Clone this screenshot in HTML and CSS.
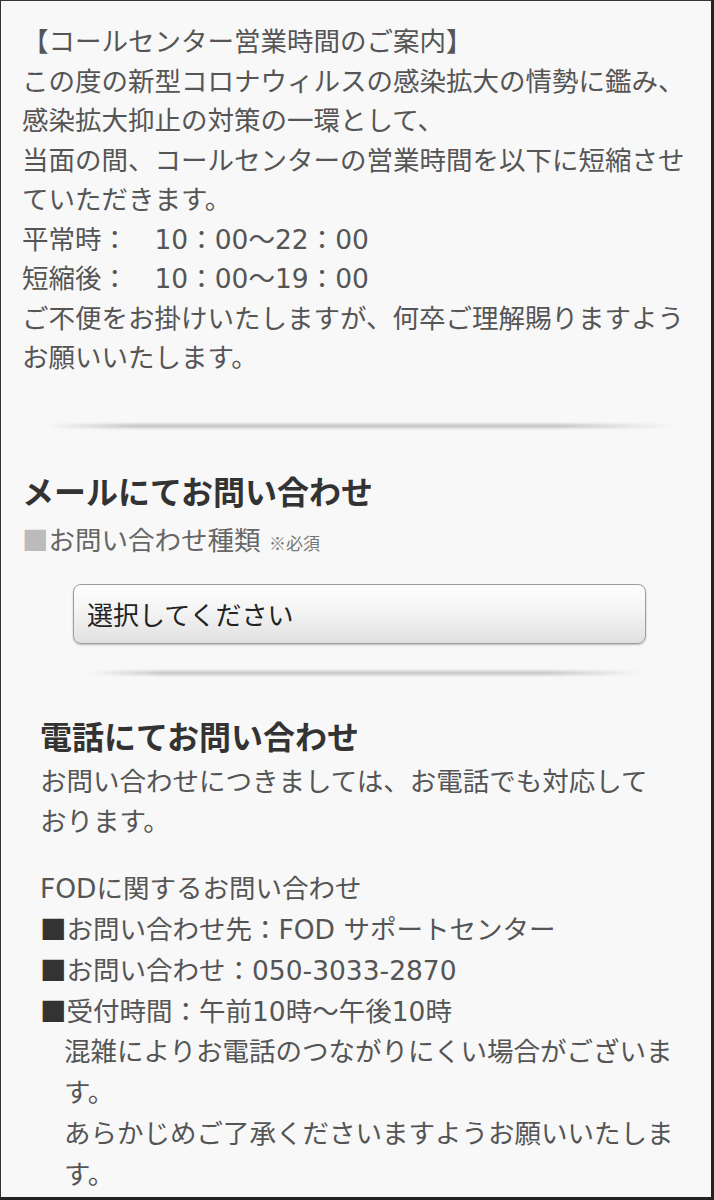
FILE: index.html
```html
<!DOCTYPE html>
<html lang="ja">
<head>
<meta charset="utf-8">
<title>お問い合わせ</title>
<link rel="stylesheet" href="styles.css">
</head>
<body>
<div class="page">
  <section class="notice">
    <p>【コールセンター営業時間のご案内】<br>この度の新型コロナウィルスの感染拡大の情勢に鑑み、<br>感染拡大抑止の対策の一環として、<br>当面の間、コールセンターの営業時間を以下に短縮させていただきます。<br>平常時：　10：00〜22：00<br>短縮後：　10：00〜19：00<br>ご不便をお掛けいたしますが、何卒ご理解賜りますようお願いいたします。</p>
  </section>

  <div class="divider"></div>

  <section class="mail">
    <h2 class="heading">メールにてお問い合わせ</h2>
    <p class="label"><span class="sq">■</span>お問い合わせ種類 <span class="req">※必須</span></p>
    <div class="select">選択してください</div>
  </section>

  <div class="divider divider-short"></div>

  <section class="phone">
    <h2 class="heading">電話にてお問い合わせ</h2>
    <p class="lead">お問い合わせにつきましては、お電話でも対応しております。</p>
    <p class="info">FODに関するお問い合わせ<br><span class="mark">■</span>お問い合わせ先：FOD サポートセンター<br><span class="mark">■</span>お問い合わせ：050-3033-2870<br><span class="mark">■</span>受付時間：午前10時〜午後10時</p>
    <p class="note">混雑によりお電話のつながりにくい場合がございます。<br>あらかじめご了承くださいますようお願いいたします。</p>
  </section>
</div>
</body>
</html>
```

FILE: styles.css
```css
html, body {
  margin: 0;
  padding: 0;
}

body {
  background: #f8f8f8;
  font-family: "DejaVu Sans", "Noto Sans CJK JP", sans-serif;
  color: #555;
}

.page {
  box-sizing: border-box;
  width: 714px;
  height: 1200px;
  overflow: hidden;
  background: #f8f8f8;
  border-top: 1px solid #333;
  border-left: 1px solid #333;
  border-right: 3px solid #222;
  border-bottom: 3px solid #222;
  padding: 21px 18px 0 21px;
  font-size: 26.5px;
  line-height: 39.75px;
}

p {
  margin: 0;
}

.notice p {
  line-height: 39.5px;
}

.divider {
  height: 4px;
  margin: 46px 20px 0 24px;
  background: linear-gradient(to right, rgba(0,0,0,0) 0%, rgba(0,0,0,0.22) 14%, rgba(0,0,0,0.22) 82%, rgba(0,0,0,0) 100%);
  filter: blur(1.5px);
}

.divider-short {
  margin: 27px 50px 0 66px;
}

.heading {
  margin: 0;
  font-family: "Noto Sans CJK JP", sans-serif;
  font-size: 32px;
  line-height: 40px;
  font-weight: 700;
  color: #333;
}

.mail .heading {
  margin-top: 42px;
}

.label {
  margin-top: 11px;
  color: #666;
}

.sq,
.mark,
.req {
  font-family: "Noto Sans CJK JP", sans-serif;
  line-height: 1;
}

.sq {
  color: #bbb;
}

.mark {
  color: #333;
}

.req {
  font-size: 17px;
  color: #777;
}

.select {
  box-sizing: border-box;
  width: 573px;
  height: 60px;
  margin: 24px 0 0 51px;
  padding-left: 13px;
  display: flex;
  align-items: center;
  border: 1px solid #9c9c9c;
  border-radius: 8px;
  background: linear-gradient(to bottom, #fefefe 0%, #f2f2f2 50%, #e0e0e0 100%);
  box-shadow: 0 1px 2px rgba(0,0,0,0.25);
  color: #222;
  font-family: "Noto Sans CJK JP", sans-serif;
  font-size: 26px;
}

.phone {
  padding: 0 18px;
}

.phone .heading {
  margin-top: 40px;
}

.lead {
  max-width: 625px;
  margin-top: 7px;
  line-height: 40px;
}

.info {
  margin-top: 27px;
  line-height: 40.75px;
}

.note {
  padding-left: 24px;
  line-height: 40.75px;
}
```
